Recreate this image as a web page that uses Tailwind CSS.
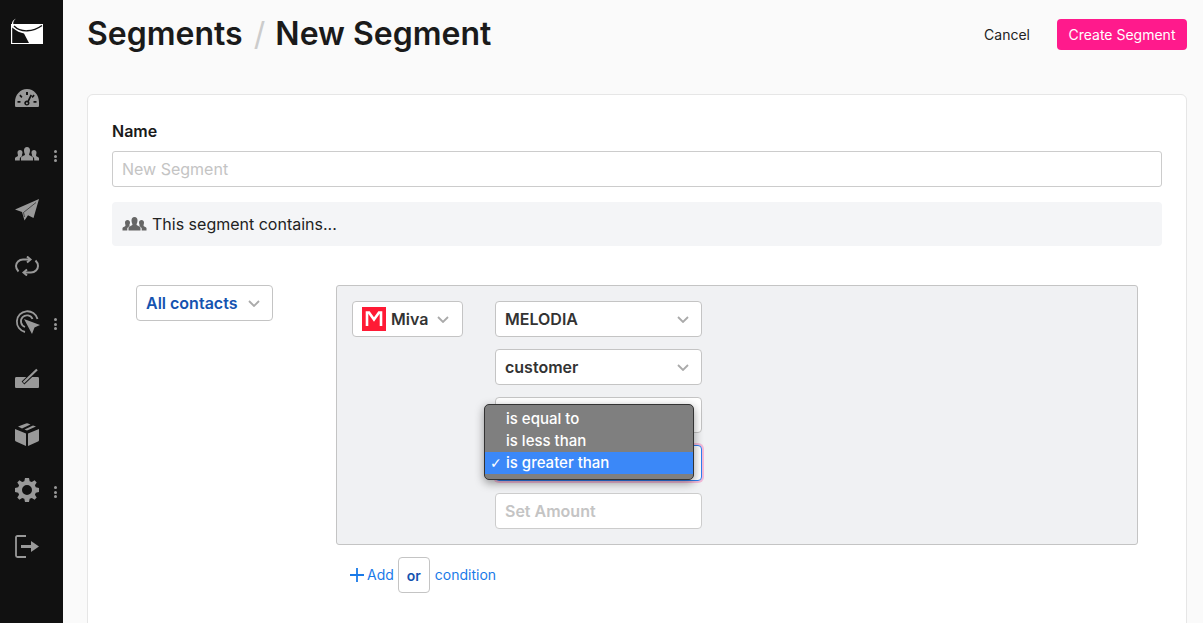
<!DOCTYPE html>
<html lang="en">
<head>
  <meta charset="UTF-8" />
  <title>New Segment</title>
  <script src="https://cdn.jsdelivr.net/npm/@tailwindcss/browser@4"></script>
</head>
<body class="h-[623px] overflow-hidden bg-[#fafafa] text-[#222] font-['Inter',sans-serif]">
<div class="flex h-[623px] overflow-hidden">
  <!-- sidebar -->
  <nav class="w-[63px] shrink-0 bg-[#111] flex flex-col items-start text-[#999]">
    <div class="h-[70px] pl-[11px] pt-[18px]">
      <svg width="33" height="26" viewBox="0 0 33 26"><path d="M0 6H32V26H0Z" fill="#fff"/><path d="M3 8C10 15 22 14 31 7.500" fill="none" stroke="#111" stroke-width="1.400"/><path d="M1.200 9.500C5 13 10 15 13 15.500L18 25H1.200Z" fill="#111"/><path d="M5 .5C2 2 .5 4 1 7L2.300 6C2 4 3 2 5 .5Z" fill="#fff"/></svg>
    </div>
    <div class="h-[56px] pl-[15px] flex items-center">
      <svg width="24" height="18" viewBox="0 0 24 18" fill="currentColor"><path fill-rule="evenodd" d="M12 0C5 0 0 6 0 13V16.500C0 17.500 .5 18 1.500 18H22.500C23.500 18 24 17.500 24 16.500V13C24 6 19 0 12 0ZM11 3H13V6H11ZM5.500 5.500L7.500 7.800L6.300 9L4.300 6.800ZM18.500 5.500L19.700 6.800L17.700 9L16.500 7.800ZM2.500 12H5.500V13.800H2.500ZM18.500 12H21.500V13.800H18.500ZM15.500 5.500L17 6.200L14 12.600C14.700 13.500 14.700 15 13.800 15.800C12.800 16.800 11 16.800 10 15.800C9 14.800 9 13.100 10.100 12.200C10.800 11.600 11.700 11.500 12.500 11.700ZM11.900 13.200A1 1 0 1 0 11.900 15.200A1 1 0 1 0 11.900 13.200Z"/></svg>
    </div>
    <div class="h-[56px] pl-[15px] flex items-center relative">
      <svg width="24" height="14" viewBox="0 0 24 14" fill="currentColor"><path d="M12 0C14 0 15 1.500 15 3.500C15 5.500 14.200 6.500 14 7.500C14 8.500 17 9 18 10.500V13.500H6V10.500C7 9 10 8.500 10 7.500C9.800 6.500 9 5.500 9 3.500C9 1.500 10 0 12 0Z"/><path d="M5 3C6.500 3 7.500 4 7.500 5.500C7.500 7 6.800 7.700 6.800 8.500L7.500 9C6 9.800 5 10.500 4.800 11.500V13.500H0V11C.5 10 3 9.500 3 8.500C3 7.700 2.500 7 2.500 5.500C2.500 4 3.500 3 5 3Z"/><path d="M19 3C20.500 3 21.500 4 21.500 5.500C21.500 7 21 7.700 21 8.500C21 9.500 23.500 10 24 11V13.500H19.200V11.500C19 10.500 18 9.800 16.500 9L17.200 8.500C17.200 7.700 16.500 7 16.500 5.500C16.500 4 17.500 3 19 3Z"/></svg>
      <span class="absolute left-[54px] top-[24px] flex flex-col gap-[1.500px]"><i class="size-[3px] rounded-full bg-[#999]"></i><i class="size-[3px] rounded-full bg-[#999]"></i><i class="size-[3px] rounded-full bg-[#999]"></i></span>
    </div>
    <div class="h-[56px] pl-[15px] flex items-center">
      <svg width="24" height="22" viewBox="0 0 24 22" fill="currentColor"><path d="M24 0L0 10.500L7 13L9.500 21.500L13 16.300L18.500 19Z"/><path d="M21 3.500L8.500 13.500L9.500 18" fill="none" stroke="#111" stroke-width=".6"/></svg>
    </div>
    <div class="h-[56px] pl-[15px] flex items-center">
      <svg width="24" height="20" viewBox="0 0 24 20" fill="none" stroke="currentColor" stroke-width="2"><path d="M15 3.500H8C4 3.500 1 6.500 1 10C1 12 2 14 3.500 15.500"/><path d="M9 16.500H16C20 16.500 23 13.500 23 10C23 8 22 6 20.500 4.500"/><path d="M12 .5L15.500 3.500L12 6.500" /><path d="M12 13.500L8.500 16.500L12 19.500" /></svg>
    </div>
    <div class="h-[56px] pl-[15px] flex items-center relative">
      <svg width="25" height="24" viewBox="0 0 25 24" fill="none" stroke="currentColor" stroke-width="1.800"><path d="M10 22A10.500 10.500 0 1 1 22.500 9"/><path d="M10 17A6 6 0 1 1 17.500 9"/><path d="M9 9L25 15L19.500 17.500L17 24Z" fill="currentColor" stroke="none"/></svg>
      <span class="absolute left-[54px] top-[24px] flex flex-col gap-[1.500px]"><i class="size-[3px] rounded-full bg-[#999]"></i><i class="size-[3px] rounded-full bg-[#999]"></i><i class="size-[3px] rounded-full bg-[#999]"></i></span>
    </div>
    <div class="h-[56px] pl-[15px] flex items-center">
      <svg width="24" height="20" viewBox="0 0 24 20" fill="currentColor"><path d="M1.500 9H22.500C23.500 9 24 9.500 24 10.500V18.500C24 19.500 23.500 20 22.500 20H1.500C.5 20 0 19.500 0 18.500V10.500C0 9.500 .5 9 1.500 9Z"/><path d="M20 3.500L8 15" fill="none" stroke="#111" stroke-width="4"/><path d="M22 1.500L8.500 14.500" fill="none" stroke="currentColor" stroke-width="2.200"/></svg>
    </div>
    <div class="h-[56px] pl-[15px] flex items-center">
      <svg width="24" height="23" viewBox="0 0 24 23" fill="currentColor"><path d="M11 .4Q12 0 13 .4L15.500 1.400L7 5.400L3 3.500Z M18 2.400L21 3.500L12 7.500L9.500 6.400Z M0 6L11 10.500V23L1 18.500Q0 18 0 17Z M24 6L13 10.500V23L23 18.500Q24 18 24 17Z"/></svg>
    </div>
    <div class="h-[56px] pl-[15px] flex items-center relative">
      <svg width="24" height="24" viewBox="0 0 24 24" fill="currentColor"><path fill-rule="evenodd" d="M10 0H14L14.700 3.200L16.800 4.100L19.600 2.300L21.700 4.400L19.900 7.200L20.800 9.300L24 10V14L20.800 14.700L19.900 16.800L21.700 19.600L19.600 21.700L16.800 19.900L14.700 20.800L14 24H10L9.300 20.800L7.200 19.900L4.400 21.700L2.300 19.600L4.100 16.800L3.200 14.700L0 14V10L3.200 9.300L4.100 7.200L2.300 4.400L4.400 2.300L7.200 4.100L9.300 3.200ZM12 7A5 5 0 1 0 12 17A5 5 0 1 0 12 7Z"/></svg>
      <span class="absolute left-[54px] top-[24px] flex flex-col gap-[1.500px]"><i class="size-[3px] rounded-full bg-[#999]"></i><i class="size-[3px] rounded-full bg-[#999]"></i><i class="size-[3px] rounded-full bg-[#999]"></i></span>
    </div>
    <div class="h-[56px] pl-[15px] flex items-center">
      <svg width="24" height="23" viewBox="0 0 24 23" fill="none" stroke="currentColor" stroke-width="1.800"><path d="M11 1H2.500Q1 1 1 2.500V20.500Q1 22 2.500 22H11"/><path d="M6 11.500H17" stroke-width="3"/><path d="M16 6L24 11.500L16 17Z" fill="currentColor" stroke="none"/></svg>
    </div>
  </nav>

  <main class="flex-1 min-w-0 pl-6 pr-4">
    <!-- title row -->
    <header class="h-[94px] flex items-start justify-between">
      <h1 class="mt-[14px] text-[32px] leading-[40px] font-semibold text-[#1a1a1a]">Segments <span class="text-[#ccc] font-normal pl-[3px] pr-[2px]">/</span> New Segment</h1>
      <div class="mt-[19px] flex items-center gap-[27px]">
        <span class="text-sm text-[#222]">Cancel</span>
        <button class="h-[31px] w-[130px] rounded-[4px] bg-[#ff1a8c] text-white text-sm">Create Segment</button>
      </div>
    </header>

    <!-- card -->
    <section class="bg-white rounded-[6px] border border-[#e6e6e6] h-[600px] px-6 pt-[26px]">
      <label class="block text-base font-semibold leading-[20px] text-[#1a1a1a]">Name</label>
      <div class="mt-[10px] h-[36px] rounded-[3px] border border-[#ccc] px-[9px] flex items-center text-base text-[#c4c4c4]">New Segment</div>
      <div class="mt-[15px] h-[44px] rounded-[4px] bg-[#f4f5f7] pl-[10px] flex items-center gap-[5px] text-base text-[#222]">
        <svg width="25" height="14" viewBox="0 0 24 14" fill="#666"><path d="M12 0C14 0 15 1.500 15 3.500C15 5.500 14.200 6.500 14 7.500C14 8.500 17 9 18 10.500V13.500H6V10.500C7 9 10 8.500 10 7.500C9.800 6.500 9 5.500 9 3.500C9 1.500 10 0 12 0Z"/><path d="M5 3C6.500 3 7.500 4 7.500 5.500C7.500 7 6.800 7.700 6.800 8.500L7.500 9C6 9.800 5 10.500 4.800 11.500V13.500H0V11C.5 10 3 9.500 3 8.500C3 7.700 2.500 7 2.500 5.500C2.500 4 3.500 3 5 3Z"/><path d="M19 3C20.500 3 21.500 4 21.500 5.500C21.500 7 21 7.700 21 8.500C21 9.500 23.500 10 24 11V13.500H19.200V11.500C19 10.500 18 9.800 16.500 9L17.200 8.500C17.200 7.700 16.500 7 16.500 5.500C16.500 4 17.500 3 19 3Z"/></svg>
        This segment contains...
      </div>

      <div class="mt-[39px] flex items-start pl-6">
        <div class="w-[137px] h-[36px] rounded-[4px] border border-[#c4c4c4] bg-white pl-[9px] pr-[12px] flex items-center justify-between text-base font-semibold text-[#1553b0]">
          All contacts
          <svg width="12" height="7" viewBox="0 0 12 7" fill="none" stroke="#aaa" stroke-width="1.800"><path d="M1 1L6 6L11 1"/></svg>
        </div>
        <div class="ml-[63px] w-[802px]">
          <div class="h-[260px] rounded-[3px] border border-[#c4c4c4] bg-[#f0f1f3] pt-[15px] pl-[15px] flex items-start gap-[32px]">
            <div class="w-[111px] h-[36px] rounded-[4px] border border-[#c4c4c4] bg-white pl-[9px] pr-[13px] flex items-center text-base font-semibold text-[#333]">
              <svg class="shrink-0" width="24" height="24" viewBox="0 0 24 24"><rect width="24" height="24" fill="#ff1a35"/><path d="M5 19V5.500H7L12 12.500L17 5.500H19V19" fill="none" stroke="#fff" stroke-width="2.600"/></svg>
              <span class="ml-[5px] flex-1">Miva</span>
              <svg width="12" height="7" viewBox="0 0 12 7" fill="none" stroke="#aaa" stroke-width="1.800"><path d="M1 1L6 6L11 1"/></svg>
            </div>
            <div class="w-[207px] flex flex-col gap-[12px] relative">
              <div class="h-[36px] rounded-[4px] border border-[#c4c4c4] bg-white pl-[9px] pr-[12px] flex items-center justify-between text-base font-semibold text-[#333]">MELODIA
                <svg width="12" height="7" viewBox="0 0 12 7" fill="none" stroke="#aaa" stroke-width="1.800"><path d="M1 1L6 6L11 1"/></svg>
              </div>
              <div class="h-[36px] rounded-[4px] border border-[#c4c4c4] bg-white pl-[9px] pr-[12px] flex items-center justify-between text-base font-semibold text-[#333]">customer
                <svg width="12" height="7" viewBox="0 0 12 7" fill="none" stroke="#aaa" stroke-width="1.800"><path d="M1 1L6 6L11 1"/></svg>
              </div>
              <div class="h-[36px] rounded-[4px] border border-[#c4c4c4] bg-white"></div>
              <div class="h-[36px] rounded-[4px] border border-[#2d7ff0] bg-white shadow-[0_0_0_2px_rgba(255,26,140,0.25)]"></div>
              <div class="h-[36px] rounded-[4px] border border-[#ccc] bg-white pl-[9px] flex items-center text-base font-semibold text-[#c4c4c4]">Set Amount</div>
              <!-- native select menu, open -->
              <ul class="absolute left-[-11px] top-[103px] w-[210px] h-[76px] rounded-[5px] bg-[#7f7f7f] border border-[#333] py-[3px] text-[15px] leading-[22px] font-medium text-white shadow-[0_3px_10px_rgba(0,0,0,0.4)]">
                <li class="pl-[21px]">is equal to</li>
                <li class="pl-[21px]">is less than</li>
                <li class="pl-[5px] bg-[#3b88f8] flex"><span class="w-[16px] text-[14px] font-normal font-['DejaVu_Sans',sans-serif]">✓</span>is greater than</li>
              </ul>
            </div>
          </div>
          <div class="mt-[12px] pl-[14px] flex items-center text-[14px] text-[#1a7ae8]">
            <svg class="mr-[3px]" width="14" height="14" viewBox="0 0 14 14" stroke="#1a7ae8" stroke-width="1.800"><path d="M7 0V14M0 7H14"/></svg>
            <span class="mb-[2px]">Add</span>
            <span class="ml-[4px] mr-[5px] w-[32px] h-[36px] rounded-[4px] border border-[#c4c4c4] flex items-center justify-center font-semibold text-[#1553b0]">or</span>
            <span class="mb-[2px]">condition</span>
          </div>
        </div>
      </div>
    </section>
  </main>
</div>
</body>
</html>
